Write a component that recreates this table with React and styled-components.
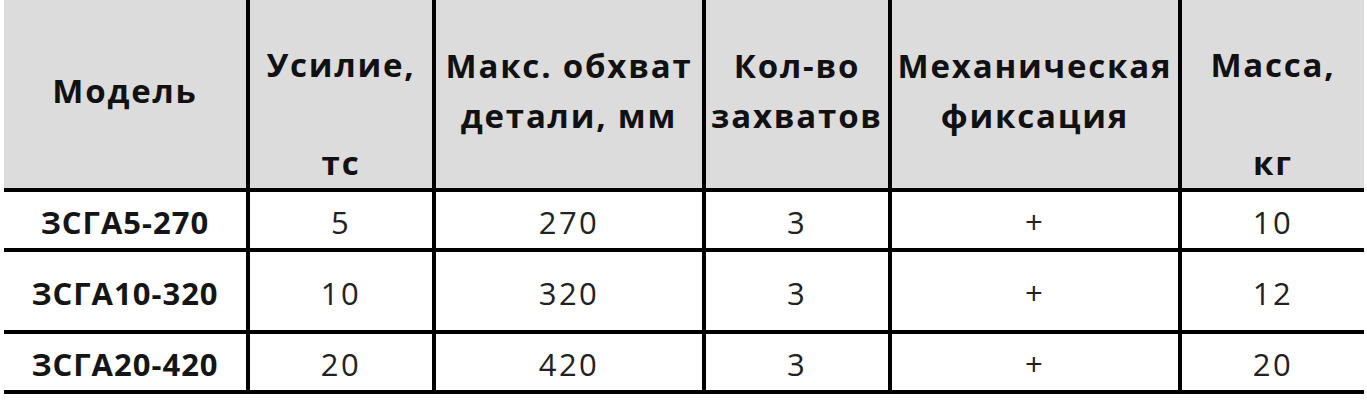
import React from 'react';
import styled, { createGlobalStyle } from 'styled-components';

const GlobalStyle = createGlobalStyle`
  html,
  body {
    margin: 0;
    padding: 0;
    background: #fff;
  }
`;

const Page = styled.div`
  padding: 0 3px 0 4px;
  background: #fff;
`;

const Table = styled.div`
  display: grid;
  grid-template-columns: 242px 182px 266px 182px 286px 182px;
  grid-template-rows: 188px 56px 78px 56px;
  gap: 4px;
  width: 1360px;
  padding-bottom: 4px;
  background: #000;
  font-family: 'Open Sans', 'Noto Sans', 'DejaVu Sans', sans-serif;
`;

const HeadCell = styled.div`
  display: flex;
  flex-direction: column;
  align-items: center;
  justify-content: ${(p) => (p.$split ? 'space-between' : 'center')};
  padding: ${(p) => (p.$split ? '40px 0 0' : '0 0 6px')};
  box-sizing: border-box;
  background: #dcdcdc;
  color: #111;
  font-size: 33px;
  font-weight: 700;
  line-height: 50px;
  letter-spacing: 1.8px;
  text-align: center;
  white-space: nowrap;
`;

const Cell = styled.div`
  display: flex;
  align-items: center;
  justify-content: center;
  padding-top: 3px;
  box-sizing: border-box;
  background: #fff;
  color: ${(p) => (p.$bold ? '#151515' : '#222')};
  font-size: 31px;
  font-weight: ${(p) => (p.$bold ? 700 : 400)};
  letter-spacing: ${(p) => (p.$bold ? '1px' : '2.5px')};
  white-space: nowrap;
`;

const headers = [
  { lines: ['Модель'] },
  { lines: ['Усилие,', 'тс'], split: true },
  { lines: ['Макс. обхват', 'детали, мм'] },
  { lines: ['Кол-во', 'захватов'] },
  { lines: ['Механическая', 'фиксация'] },
  { lines: ['Масса,', 'кг'], split: true },
];

const rows = [
  ['ЗСГА5-270', '5', '270', '3', '+', '10'],
  ['ЗСГА10-320', '10', '320', '3', '+', '12'],
  ['ЗСГА20-420', '20', '420', '3', '+', '20'],
];

export default function App() {
  return (
    <>
      <GlobalStyle />
      <Page>
        <Table>
          {headers.map((h, i) => (
            <HeadCell key={`h${i}`} $split={h.split}>
              {h.lines.map((line) => (
                <span key={line}>{line}</span>
              ))}
            </HeadCell>
          ))}
          {rows.map((row, r) =>
            row.map((value, c) => (
              <Cell key={`${r}-${c}`} $bold={c === 0}>
                {value}
              </Cell>
            ))
          )}
        </Table>
      </Page>
    </>
  );
}
